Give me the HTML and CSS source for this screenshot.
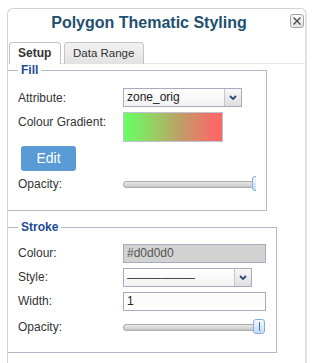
FILE: index.html
```html
<!DOCTYPE html>
<html>
<head>
<meta charset="utf-8">
<link rel="stylesheet" href="styles.css">
</head>
<body>
<div class="dialog">
  <div class="titlebar">
    <div class="title">Polygon Thematic Styling</div>
    <div class="close"><svg width="12" height="12" viewBox="0 0 12 12"><path d="M2.5 2.5 L9.5 9.5 M9.5 2.5 L2.5 9.5" stroke="#444" stroke-width="1.3" fill="none"/></svg></div>
  </div>
  <div class="tabs">
    <div class="tab active">Setup</div>
    <div class="tab">Data Range</div>
  </div>
  <div class="panel">
    <fieldset class="group fill">
      <legend>Fill</legend>
      <div class="form">
        <div class="label">Attribute:</div>
        <div class="select attr"><span class="val">zone_orig</span><span class="drop"><svg width="8" height="5" viewBox="0 0 8 5"><path d="M1 1 L4 4 L7 1" stroke="#2b4a7c" stroke-width="1.8" fill="none"/></svg></span></div>
        <div class="label top">Colour Gradient:</div>
        <div class="gradient"></div>
        <div class="editrow"><div class="edit">Edit</div></div>
        <div class="label">Opacity:</div>
        <div class="slider short"><div class="track"></div><div class="handle"><i></i></div></div>
      </div>
    </fieldset>
    <fieldset class="group stroke">
      <legend>Stroke</legend>
      <div class="form">
        <div class="label">Colour:</div>
        <div class="input disabled">#d0d0d0</div>
        <div class="label">Style:</div>
        <div class="select style"><span class="val dash">——————</span><span class="drop"><svg width="8" height="5" viewBox="0 0 8 5"><path d="M1 1 L4 4 L7 1" stroke="#2b4a7c" stroke-width="1.8" fill="none"/></svg></span></div>
        <div class="label">Width:</div>
        <div class="input">1</div>
        <div class="label op">Opacity:</div>
        <div class="slider long"><div class="track"></div><div class="handle"><i></i></div></div>
      </div>
    </fieldset>
  </div>
</div>
</body>
</html>
```

FILE: styles.css
```css
html, body {
  margin: 0;
  padding: 0;
  background: #fff;
}
body {
  font-family: "Liberation Sans", Arial, sans-serif;
  font-size: 12px;
  color: #333;
}
.dialog {
  margin: 8px 0 0 7px;
  width: 297px;
  height: 354px;
  border: 1px solid #d4d4d4;
  border-right: 2px solid #e2e2e2;
  border-bottom: none;
  border-radius: 6px 6px 0 0;
  overflow: hidden;
}
.titlebar {
  display: flex;
  height: 33px;
}
.title {
  flex: 1;
  text-align: center;
  padding-top: 4px;
  font-size: 16px;
  line-height: 20px;
  font-weight: bold;
  color: #214f6e;
}
.close {
  width: 12px;
  height: 12px;
  margin: 5px 1px 0 0;
  border: 1px solid #a4a4a4;
  border-radius: 3px;
  background: linear-gradient(#fbfbfb, #e4e4e4);
  display: flex;
}
.tabs {
  display: flex;
  gap: 3px;
  padding-left: 1px;
  height: 21px;
  border-bottom: 1px solid #e6e6e6;
}
.tab {
  box-sizing: border-box;
  height: 22px;
  padding: 0 9px 0 8px;
  border: 1px solid #c4c4c4;
  border-bottom: none;
  border-radius: 4px 4px 0 0;
  background: linear-gradient(#f2f2f2, #e2e2e2);
  line-height: 20px;
  font-size: 11.5px;
  color: #333;
}
.tab.active {
  background: #fff;
  font-weight: bold;
  font-size: 12px;
  padding: 0 8px 0 8px;
  width: 52px;
}
.panel {
  display: flex;
  flex-direction: column;
  align-items: flex-start;
}
.group {
  margin: 0 0 0 -1px;
  border: 1px solid #b6b6cc;
  min-width: 0;
}
.group legend {
  padding: 0 3px;
  font-weight: bold;
  font-size: 12px;
  line-height: 12px;
  color: #1c4a96;
}
.fill {
  width: 260px;
  box-sizing: border-box;
  padding: 12px 10px 16px 10px;
}
.stroke {
  width: 270px;
  box-sizing: border-box;
  margin-top: 10px;
  padding: 11px 10px 15px 10px;
}
.form {
  display: grid;
  grid-template-columns: 105px 1fr;
  row-gap: 5px;
  align-items: center;
}
.fill .form {
  row-gap: 4px;
}
.label {
  line-height: 19px;
  color: #333;
}
.label.top {
  align-self: start;
  padding-top: 1px;
}
.label.op {
  margin-top: 2px;
}
.select {
  box-sizing: border-box;
  height: 19px;
  display: flex;
  border: 1px solid #a9aabf;
  background: linear-gradient(#ffffff, #f2f2f2);
}
.fill .select {
  margin-bottom: 1px;
}
.select.attr {
  width: 119px;
}
.select.style {
  width: 129px;
}
.select .val {
  flex: 1;
  padding-left: 3px;
  line-height: 17px;
  color: #222;
  overflow: hidden;
  white-space: nowrap;
}
.select .val.dash {
  font-size: 11.5px;
  letter-spacing: -0.2px;
}
.select .drop {
  width: 16px;
  border-left: 1px solid #c6c6c6;
  background: linear-gradient(#f8f8f8, #dedede);
  display: flex;
  align-items: center;
  justify-content: center;
}
.gradient {
  box-sizing: border-box;
  width: 100px;
  height: 30px;
  border: 1px solid #c2c2d4;
  background: linear-gradient(to right, #66ff66 0%, #97d064 30%, #c39a66 60%, #f27068 88%, #ff6666 100%);
}
.editrow {
  grid-column: 1 / -1;
  padding-left: 3px;
}
.edit {
  width: 55px;
  height: 25px;
  border-radius: 3px;
  background: #5a9bd6;
  color: #fff;
  font-size: 14px;
  line-height: 25px;
  text-align: center;
}
.input {
  box-sizing: border-box;
  width: 143px;
  height: 19px;
  border: 1px solid #a9aabf;
  padding-left: 3px;
  line-height: 17px;
  color: #222;
  background: linear-gradient(#fafafa, #fff);
}
.input.disabled {
  background: #d2d2d2;
  color: #555;
}
.slider {
  position: relative;
  height: 19px;
  overflow: hidden;
}
.slider.short {
  width: 133px;
}
.slider.long {
  width: 142px;
  margin-top: 2px;
}
.track {
  position: absolute;
  left: 0;
  right: 2px;
  top: 6px;
  height: 5px;
  border: 1px solid #ababab;
  border-radius: 3px;
  background: linear-gradient(#e8e8e8, #c8c8c8);
}
.handle {
  position: absolute;
  top: 1px;
  width: 10px;
  height: 13px;
  border: 1px solid #86ace0;
  border-radius: 3px;
  background: linear-gradient(#f4f8ff, #c6dbf6);
  display: flex;
  justify-content: center;
  align-items: center;
}
.short .handle {
  left: 129px;
}
.long .handle {
  right: 0;
}
.handle i {
  display: block;
  width: 1px;
  height: 9px;
  background: #3d6fbe;
}
```
